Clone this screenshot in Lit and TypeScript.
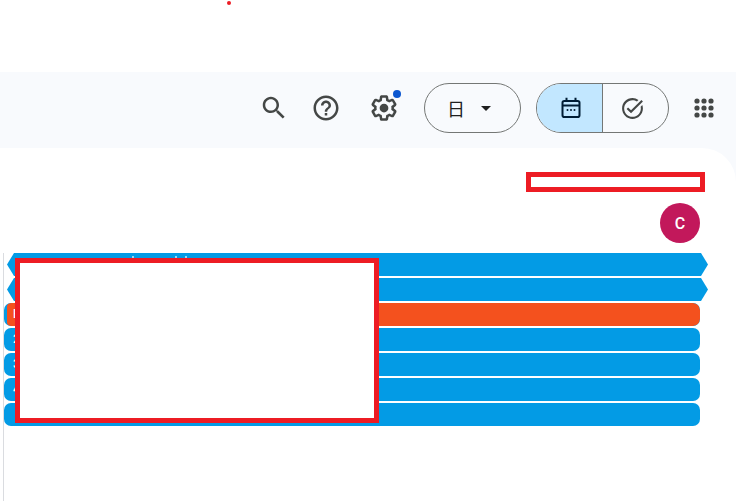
import { LitElement, html, css } from "lit";
import { customElement } from "lit/decorators.js";

@customElement("app-root")
export class AppRoot extends LitElement {
  static styles = css`
    :host { display: block; height: 501px; overflow: hidden; position: relative; background: #fff; font-family: Roboto, "Liberation Sans", sans-serif; }
    .page { display: flex; flex-direction: column; height: 501px; }
    .top { height: 72px; flex: none; }
    .shell { flex: 1; display: flex; flex-direction: column; background: #f8fafd; min-height: 0; }
    .bar { height: 76px; flex: none; display: flex; align-items: center; justify-content: flex-end; padding: 0 20px 4px 0; box-sizing: border-box; }
    .ic { width: 30px; height: 30px; display: block; fill: #444746; flex: none; }
    .search { margin-right: 22px; }
    .help { margin-right: 28px; }
    .gear-wrap { position: relative; width: 30px; height: 30px; margin-right: 25px; flex: none; }
    .dot { position: absolute; left: 24px; top: -3px; width: 8px; height: 8px; border-radius: 50%; background: #0b57d0; }
    .pill { width: 97px; height: 50px; box-sizing: border-box; border: 1px solid #747775; border-radius: 25px; display: flex; align-items: center; margin-right: 15px; padding-left: 22px; flex: none; }
    .day { font: 400 18px "Noto Sans CJK JP", sans-serif; color: #1f1f1f; width: 18px; text-align: center; line-height: 22px; }
    .caret { width: 0; height: 0; border-left: 5px solid transparent; border-right: 5px solid transparent; border-top: 5px solid #1f1f1f; margin-left: 16px; }
    .seg { width: 133px; height: 50px; box-sizing: border-box; border: 1px solid #747775; border-radius: 25px; display: flex; overflow: hidden; margin-right: 23px; flex: none; }
    .seg-a { width: 65px; box-sizing: border-box; padding-left: 3px; background: #c2e7ff; display: flex; align-items: center; justify-content: center; }
    .seg-b { flex: 1; box-sizing: border-box; padding-right: 6px; border-left: 1px solid #747775; display: flex; align-items: center; justify-content: center; }
    .cal { width: 24px; height: 24px; display: block; }
    .task { width: 25px; height: 25px; display: block; fill: #444746; }
    .apps { width: 24px; height: 24px; display: block; fill: #444746; flex: none; }
    .panel { flex: 1; background: #fff; border-top-right-radius: 34px; display: flex; flex-direction: column; min-height: 0; }
    .who { display: flex; justify-content: flex-end; padding: 55px 36px 10px 0; }
    .avatar { width: 40px; height: 40px; border-radius: 50%; background: #c2185b; color: #fff; font-size: 16px; font-weight: 500; display: flex; align-items: center; justify-content: center; }
    .grid { flex: 1; margin-left: 3px; border-left: 1px solid #dadce0; display: flex; flex-direction: column; gap: 2px; }
    .row { height: 23px; flex: none; box-sizing: border-box; color: #fff; font-size: 12px; font-weight: 500; line-height: 23px; display: flex; white-space: nowrap; overflow: hidden; }
    .arrow { margin-left: 3px; width: 701px; background: #039be5; clip-path: polygon(7px 0, calc(100% - 7px) 0, 100% 50%, calc(100% - 7px) 100%, 7px 100%, 0 50%); }
    .round { width: 696px; background: #039be5; border-radius: 7px; padding-left: 9px; }
    .orange { padding-left: 3px; }
    .orange-in { flex: 1; background: #f4511e; border-radius: 4px 7px 7px 4px; padding-left: 6px; }
    .specks { display: flex; align-items: flex-start; margin: 3px 0 0 125px; }
    .speck { width: 2px; height: 2px; background: #9fd6f4; }
    .sp2 { margin-left: 41px; }
    .sp3 { margin-left: 8px; }
    .mark { position: absolute; box-sizing: border-box; border: 5px solid #ed1c24; background: #fff; }
    .mark-a { left: 526px; top: 172px; width: 179px; height: 20px; }
    .mark-b { left: 15px; top: 258px; width: 364px; height: 165px; }
    .pin { position: absolute; left: 227px; top: 1px; width: 4px; height: 4px; border-radius: 50%; background: #ed1c24; }
  `;

  render() {
    return html`
      <div class="page">
        <div class="top"></div>
        <div class="shell">
          <div class="bar">
            <svg class="ic search" viewBox="0 0 24 24"><path d="M15.5 14h-.79l-.28-.27C15.41 12.59 16 11.11 16 9.5 16 5.91 13.09 3 9.5 3S3 5.91 3 9.5 5.91 16 9.5 16c1.61 0 3.09-.59 4.23-1.57l.27.28v.79l5 4.99L20.49 19l-4.99-5zm-6 0C7.01 14 5 11.99 5 9.5S7.01 5 9.5 5 14 7.01 14 9.5 11.99 14 9.5 14z"/></svg>
            <svg class="ic help" viewBox="0 0 24 24"><path d="M11 18h2v-2h-2v2zm1-16C6.48 2 2 6.48 2 12s4.48 10 10 10 10-4.48 10-10S17.52 2 12 2zm0 18c-4.41 0-8-3.59-8-8s3.59-8 8-8 8 3.59 8 8-3.59 8-8 8zm0-14c-2.21 0-4 1.79-4 4h2c0-1.1.9-2 2-2s2 .9 2 2c0 2-3 1.75-3 5h2c0-2.25 3-2.5 3-5 0-2.21-1.79-4-4-4z"/></svg>
            <div class="gear-wrap">
              <svg class="ic" viewBox="0 0 24 24"><path d="M13.85 22.25h-3.7c-.74 0-1.36-.54-1.45-1.27l-.27-1.89c-.27-.14-.53-.29-.79-.46l-1.8.72c-.7.26-1.47-.03-1.81-.65L2.2 15.53c-.35-.66-.2-1.44.36-1.88l1.53-1.19c-.01-.15-.02-.3-.02-.46 0-.15.01-.31.02-.46l-1.52-1.19c-.59-.45-.74-1.26-.37-1.88l1.85-3.19c.34-.62 1.11-.9 1.79-.63l1.81.73c.26-.17.52-.32.78-.46l.27-1.91c.09-.7.71-1.25 1.44-1.25h3.7c.74 0 1.36.54 1.45 1.27l.27 1.89c.27.14.53.29.79.46l1.8-.72c.71-.26 1.48.03 1.82.65l1.84 3.18c.36.66.2 1.44-.36 1.88l-1.52 1.19c.01.15.02.3.02.46s-.01.31-.02.46l1.52 1.19c.56.45.72 1.23.37 1.86l-1.86 3.22c-.34.62-1.11.9-1.8.63l-1.8-.72c-.26.17-.52.32-.78.46l-.27 1.91c-.1.68-.72 1.22-1.46 1.22zm-3.23-2h2.76l.37-2.55.53-.22c.44-.18.88-.44 1.34-.78l.45-.34 2.38.96 1.38-2.4-2.03-1.58.07-.56c.03-.26.06-.51.06-.78s-.03-.53-.06-.78l-.07-.56 2.03-1.58-1.39-2.4-2.39.96-.45-.35c-.42-.32-.87-.58-1.33-.77l-.52-.22-.37-2.55h-2.76l-.37 2.55-.53.21c-.44.19-.88.44-1.34.79l-.45.33-2.38-.95-1.39 2.39 2.03 1.58-.07.56a7 7 0 0 0-.06.79c0 .26.02.53.06.78l.07.56-2.03 1.58 1.38 2.4 2.39-.96.45.35c.43.33.86.58 1.33.77l.53.22.38 2.55z"/><circle cx="12" cy="12" r="3.5"/></svg>
              <span class="dot"></span>
            </div>
            <div class="pill"><span class="day">日</span><span class="caret"></span></div>
            <div class="seg">
              <div class="seg-a">
                <svg class="cal" viewBox="0 0 24 24" fill="none" stroke="#001d35" stroke-width="2"><rect x="3.5" y="5" width="17" height="16" rx="1.8"/><path d="M7.5 1.8v4M16.5 1.8v4M3.5 9.5h17"/><g fill="#001d35" stroke="none"><circle cx="8.5" cy="14" r="1"/><circle cx="12" cy="14" r="1"/><circle cx="15.5" cy="14" r="1"/></g></svg>
              </div>
              <div class="seg-b">
                <svg class="task" viewBox="0 0 24 24"><path d="M22 5.18 10.59 16.6l-4.24-4.24 1.41-1.41 2.83 2.83 10-10L22 5.18zm-2.21 5.04c.13.57.21 1.17.21 1.78 0 4.42-3.58 8-8 8s-8-3.58-8-8 3.58-8 8-8c1.58 0 3.04.46 4.28 1.25l1.44-1.44A9.9 9.9 0 0 0 12 2C6.48 2 2 6.48 2 12s4.48 10 10 10 10-4.48 10-10c0-1.19-.22-2.33-.6-3.39l-1.61 1.61z"/></svg>
              </div>
            </div>
            <svg class="apps" viewBox="0 0 24 24"><circle cx="5" cy="5" r="2.6"/><circle cx="12" cy="5" r="2.6"/><circle cx="19" cy="5" r="2.6"/><circle cx="5" cy="12" r="2.6"/><circle cx="12" cy="12" r="2.6"/><circle cx="19" cy="12" r="2.6"/><circle cx="5" cy="19" r="2.6"/><circle cx="12" cy="19" r="2.6"/><circle cx="19" cy="19" r="2.6"/></svg>
          </div>
          <div class="panel">
            <div class="who"><div class="avatar">C</div></div>
            <div class="grid">
              <div class="row arrow"><div class="specks"><span class="speck"></span><span class="speck sp2"></span><span class="speck sp3"></span></div></div>
              <div class="row arrow"></div>
              <div class="row round orange"><div class="orange-in">E</div></div>
              <div class="row round">2</div>
              <div class="row round">3</div>
              <div class="row round">4</div>
              <div class="row round"></div>
            </div>
          </div>
        </div>
      </div>
      <span class="pin"></span>
      <div class="mark mark-a"></div>
      <div class="mark mark-b"></div>
    `;
  }
}
